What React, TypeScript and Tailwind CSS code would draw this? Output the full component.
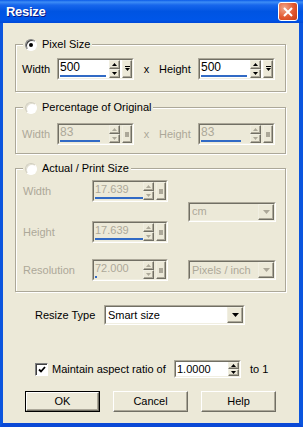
import type { ReactNode } from 'react';
import { clsx } from 'clsx';

const GRAY = 'text-[#aca899]';

function Sunken({ className, inner, children }: { className?: string; inner?: string; children: ReactNode }) {
  return (
    <div className={clsx('flex border border-t-[#aca899] border-l-[#aca899] border-b-white border-r-white', className)}>
      <div
        className={clsx(
          'flex min-w-0 flex-1 border border-t-[#716f64] border-l-[#716f64] border-b-[#f1efe2] border-r-[#f1efe2]',
          inner
        )}
      >
        {children}
      </div>
    </div>
  );
}

function Raised({ className, children }: { className?: string; children?: ReactNode }) {
  return (
    <div
      className={clsx(
        'flex items-center justify-center border border-t-[#f1efe2] border-l-[#f1efe2] border-b-[#716f64] border-r-[#716f64] bg-[#ece9d8] shadow-[inset_-1px_-1px_0_#aca899]',
        className
      )}
    >
      {children}
    </div>
  );
}

function Spinner({ disabled }: { disabled?: boolean }) {
  const c = disabled ? '#aca899' : '#000';
  return (
    <div className="flex w-[11px] flex-col">
      <Raised className="flex-1">
        <svg width="5" height="3" viewBox="0 0 5 3">
          <path d="M2.5 0L5 3H0Z" fill={c} />
        </svg>
      </Raised>
      <Raised className="flex-1">
        <svg width="5" height="3" viewBox="0 0 5 3">
          <path d="M0 0H5L2.5 3Z" fill={c} />
        </svg>
      </Raised>
    </div>
  );
}

interface SpinFieldProps {
  value: string;
  bar?: string;
  disabled?: boolean;
  slider?: boolean;
  className?: string;
  text?: string;
}

function SpinField({ value, bar, disabled, slider = true, className, text = 'text-[12px]' }: SpinFieldProps) {
  return (
    <Sunken className={className} inner={disabled ? 'bg-[#ece9d8]' : 'bg-white'}>
      <div className="flex min-w-0 flex-1 flex-col justify-between pb-[1px] pl-[1px]">
        <span className={clsx(text, 'leading-[15px]', disabled ? GRAY : 'text-black')}>{value}</span>
        {bar && <div className={clsx('h-[2px] bg-[#316ac5]', bar)} />}
      </div>
      <Spinner disabled={disabled} />
      {slider && (
        <Raised className="ml-[2px] w-[10px]">
          {disabled ? (
            <div className="h-[5px] w-[4px] bg-[#aca899]" />
          ) : (
            <svg width="5" height="6" viewBox="0 0 5 6">
              <rect x="0" y="0" width="5" height="1" fill="#000" />
              <path d="M0 2H5L2.5 5Z" fill="#000" />
            </svg>
          )}
        </Raised>
      )}
    </Sunken>
  );
}

function Combo({ value, disabled, className }: { value: string; disabled?: boolean; className?: string }) {
  return (
    <Sunken className={className} inner={disabled ? 'bg-[#ece9d8]' : 'bg-white'}>
      <div className={clsx('flex flex-1 items-center pl-[2px] text-[11px]', disabled ? GRAY : 'text-black')}>
        {value}
      </div>
      <Raised className="w-[16px]">
        <svg width="7" height="4" viewBox="0 0 7 4">
          <path d="M0 0H7L3.5 4Z" fill={disabled ? '#aca899' : '#000'} />
        </svg>
      </Raised>
    </Sunken>
  );
}

function Radio({ checked, disabled }: { checked?: boolean; disabled?: boolean }) {
  return (
    <div
      className={clsx(
        'flex h-[12px] w-[12px] items-center justify-center rounded-full border bg-white border-b-white border-r-white',
        disabled
          ? 'border-t-[#cfccbd] border-l-[#cfccbd] shadow-[inset_1px_1px_0_#e2dfd2]'
          : 'border-t-[#808080] border-l-[#808080] shadow-[inset_1px_1px_0_#404040]'
      )}
    >
      {checked && <div className="h-[4px] w-[4px] rounded-full bg-black" />}
    </div>
  );
}

function Checkbox() {
  return (
    <div className="flex h-[13px] w-[13px] items-center justify-center border border-t-[#808080] border-l-[#808080] border-b-white border-r-white bg-white shadow-[inset_1px_1px_0_#404040]">
      <svg width="8" height="7" viewBox="0 0 8 7">
        <path d="M1 3.5L3 5.5L7 1" stroke="#000" strokeWidth="1.8" fill="none" />
      </svg>
    </div>
  );
}

function Group({
  label,
  checked,
  disabled,
  className,
  children,
}: {
  label: string;
  checked?: boolean;
  disabled?: boolean;
  className?: string;
  children: ReactNode;
}) {
  return (
    <div className={clsx('relative border border-[#aca899] shadow-[inset_1px_1px_0_#fff,1px_1px_0_#fff]', className)}>
      <div className="absolute -top-[7px] left-[7px] flex h-[13px] items-center gap-[5px] bg-[#ece9d8] px-[2px] text-black">
        <Radio checked={checked} disabled={disabled} />
        <span>{label}</span>
      </div>
      {children}
    </div>
  );
}

function Button({ children, isDefault }: { children: ReactNode; isDefault?: boolean }) {
  return (
    <button
      className={clsx(
        'flex h-[21px] w-[75px] bg-[#ece9d8] text-[11px] text-black',
        isDefault && 'border border-black'
      )}
    >
      <span className="flex h-full w-full items-center justify-center border border-t-white border-l-white border-b-[#716f64] border-r-[#716f64] shadow-[inset_-1px_-1px_0_#aca899]">
        {children}
      </span>
    </button>
  );
}

function SizeRow({ value, bar, disabled }: { value: string; bar: string; disabled?: boolean }) {
  const tone = disabled ? GRAY : 'text-black';
  return (
    <div className="flex items-center">
      <span className={clsx('w-[35px]', tone)}>Width</span>
      <SpinField className="h-[22px] w-[77px]" value={value} bar={bar} disabled={disabled} />
      <span className={clsx('w-[25px] text-center', tone)}>x</span>
      <span className={clsx('w-[39px]', tone)}>Height</span>
      <SpinField className="h-[22px] w-[77px]" value={value} bar={bar} disabled={disabled} />
    </div>
  );
}

function PrintRow({ label, value, bar }: { label: string; value: string; bar: string }) {
  return (
    <div className="flex items-center">
      <span className={clsx('w-[69px]', GRAY)}>{label}</span>
      <SpinField className="h-[22px] w-[76px]" value={value} bar={bar} disabled text="text-[11px]" />
    </div>
  );
}

export default function App() {
  return (
    <div className="flex h-[427px] w-[303px] flex-col font-['Liberation_Sans',Arial,sans-serif] text-[11px]">
      {/* Title bar */}
      <div className="flex h-[23px] items-center justify-between bg-[linear-gradient(to_bottom,#0a5ae8_0%,#3d8df6_9%,#1766ec_22%,#0054e2_50%,#0056e8_85%,#0048d8_100%)] pl-[6px] pr-[5px]">
        <span className="text-[13px] font-bold tracking-[-0.3px] text-white [text-shadow:1px_1px_0_#0a1883]">
          Resize
        </span>
        <div className="flex h-[19px] w-[20px] items-center justify-center rounded-[3px] border border-white bg-[radial-gradient(circle_at_30%_30%,#f2a88c,#e2582f_55%,#c43c15)]">
          <svg width="10" height="10" viewBox="0 0 10 10">
            <path d="M1 1L9 9M9 1L1 9" stroke="#fff" strokeWidth="2" />
          </svg>
        </div>
      </div>

      {/* Body */}
      <div className="flex flex-1 flex-col border-b-[4px] border-l-[3px] border-r-[4px] border-b-[#0a48d6] border-l-[#0b55de] border-r-[#0b55de] bg-[#ece9d8] pl-[12px] pr-[13px] pt-[21px]">
        <Group label="Pixel Size" checked className="pb-[11px] pl-[6px] pt-[13px]">
          <SizeRow value="500" bar="w-[46px]" />
        </Group>

        <Group label="Percentage of Original" disabled className="mt-[15px] pb-[8px] pl-[6px] pt-[15px]">
          <SizeRow value="83" bar="w-[40px]" disabled />
        </Group>

        <Group label="Actual / Print Size" disabled className="mt-[14px] pb-[10px] pl-[7px] pt-[11px]">
          <div className="flex">
            <div className="flex flex-col gap-[19px]">
              <PrintRow label="Width" value="17.639" bar="w-[50px]" />
              <PrintRow label="Height" value="17.639" bar="w-[50px]" />
            </div>
            <div className="ml-[20px] flex items-center">
              <Combo className="h-[20px] w-[88px]" value="cm" disabled />
            </div>
          </div>
          <div className="mt-[16px] flex items-center">
            <PrintRow label="Resolution" value="72.000" bar="w-[2px]" />
            <Combo className="ml-[20px] h-[20px] w-[88px]" value="Pixels / inch" disabled />
          </div>
        </Group>

        <div className="mt-[13px] flex items-center pl-[20px]">
          <span className="w-[69px] text-black">Resize Type</span>
          <Combo className="h-[20px] w-[141px]" value="Smart size" />
        </div>

        <div className="mt-[35px] flex h-[18px] items-center pl-[20px]">
          <div className="flex w-[139px] items-center gap-[4px]">
            <Checkbox />
            <span className="text-black">Maintain aspect ratio of</span>
          </div>
          <SpinField className="h-[18px] w-[67px]" value="1.0000" slider={false} text="text-[11px]" />
          <span className="ml-[9px] text-black">to 1</span>
        </div>

        <div className="mt-[13px] flex gap-[13px] pl-[10px]">
          <Button isDefault>OK</Button>
          <Button>Cancel</Button>
          <Button>Help</Button>
        </div>
      </div>
    </div>
  );
}
